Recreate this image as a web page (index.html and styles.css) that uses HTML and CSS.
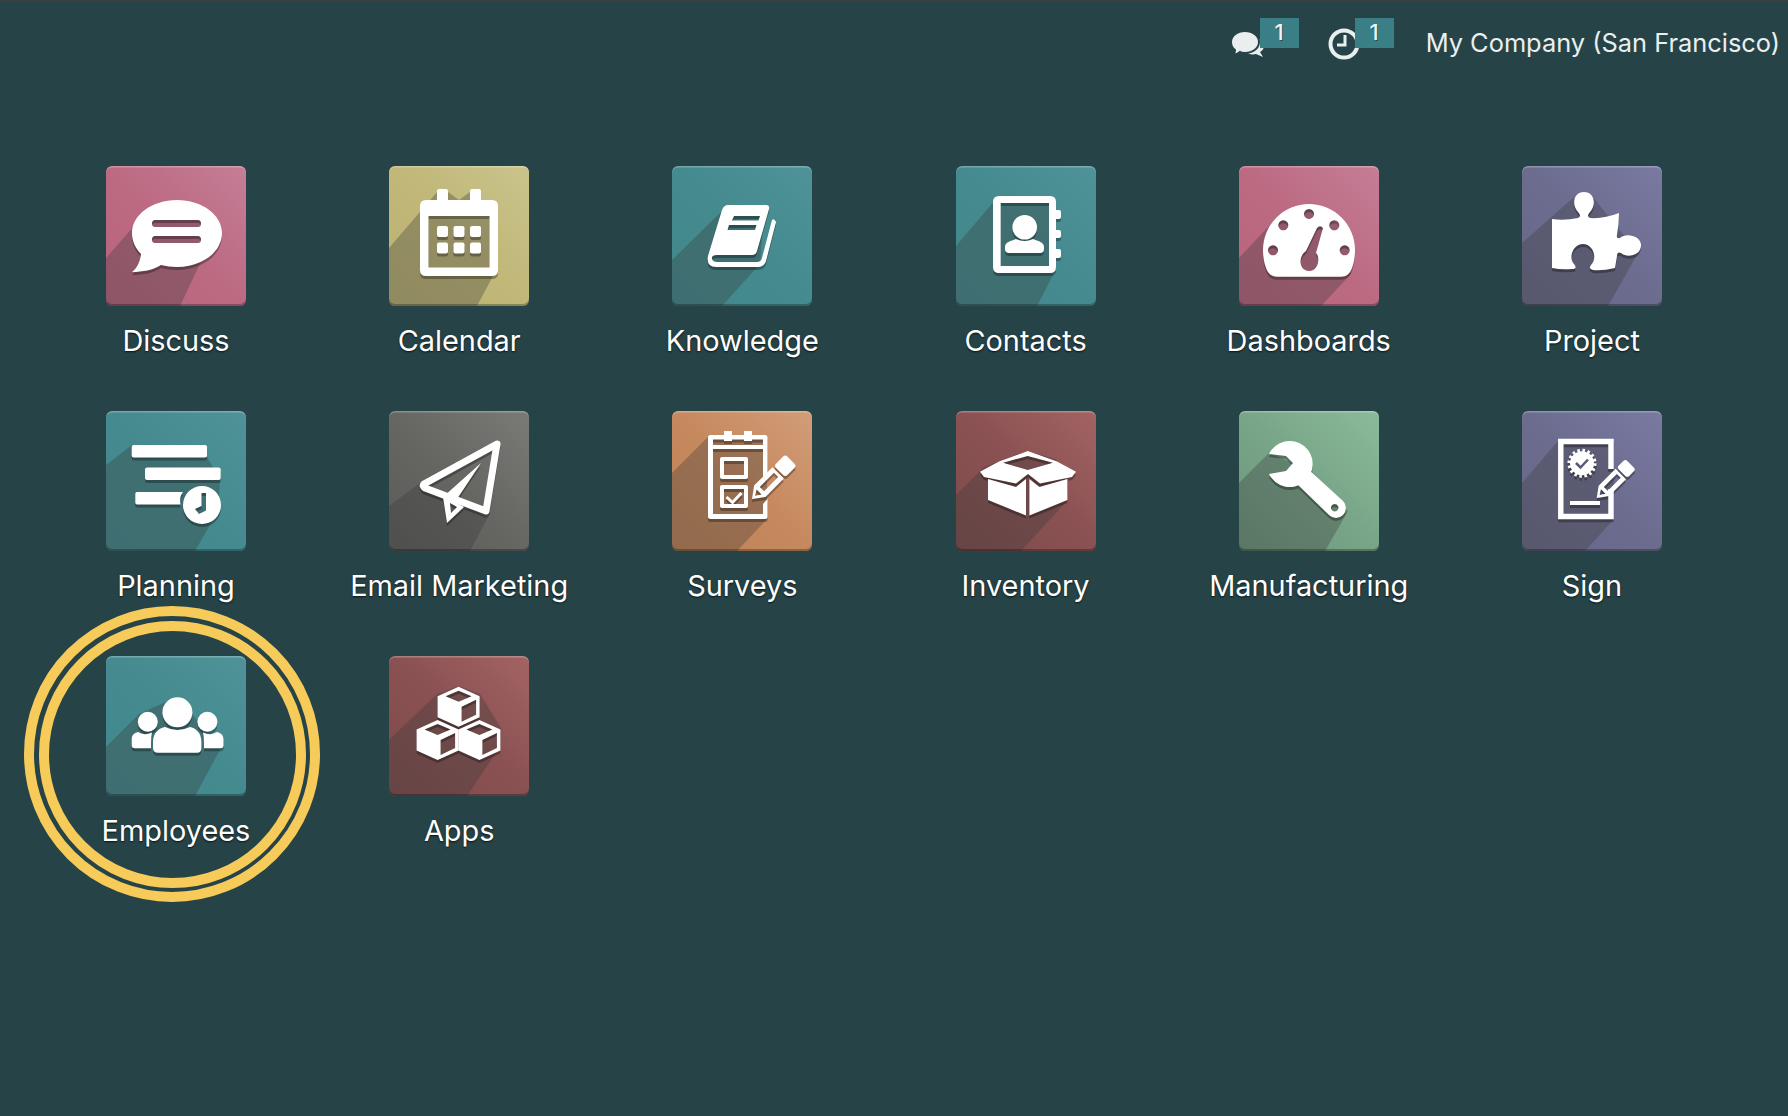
FILE: index.html
```html
<!DOCTYPE html>
<html lang="en">
<head>
<meta charset="utf-8">
<title>Odoo</title>
<link rel="stylesheet" href="styles.css">
</head>
<body>
<header class="topbar">
  <div class="sys-item sys-chat">
    <svg class="sys-icon" width="36" height="28" viewBox="0 0 36 28">
      <path class="sys-fill" d="M17 12 C22 6 34 8 34 16 C34 19 32 21 30 22 L33 27 L26 24 C22 25 18 24 16 22 Z"/>
      <path class="sys-fill sys-cut" d="M15 1 C23 1 29 6 29 12 C29 18 23 23 15 23 C13 23 11 23 10 22 C8 24 5 25 2 25 C4 24 5 22 5 20 C2 18 1 15 1 12 C1 6 7 1 15 1 Z"/>
    </svg>
    <span class="badge">1</span>
  </div>
  <div class="sys-item sys-clock">
    <svg class="sys-icon" width="34" height="34" viewBox="0 0 34 34">
      <circle class="sys-ring" cx="17" cy="17" r="13.5"/>
      <path class="sys-hand" d="M18 8 V18 H10"/>
    </svg>
    <span class="badge">1</span>
  </div>
  <span class="company">My Company (San Francisco)</span>
</header>

<main class="apps">
  <a class="app">
    <div class="tile pink">
      <svg viewBox="0 0 140 140" width="140" height="140">
        <polygon class="cast" points="0,92 35,52 96,50 100,85 74,140 0,140"/>
        <path class="glyph" fill-rule="evenodd" d="M71 34 C96 34 116 49 116 67 C116 86 96 101 71 101 C65 101 60 100 55 99 C47 104 37 106 26 106 C31 102 34 96 35 88 C29 82 26 75 26 67 C26 49 46 34 71 34 Z M49 54 Q46 54 46 57.5 Q46 61 49 61 H92 Q95 61 95 57.5 Q95 54 92 54 Z M49 70 Q46 70 46 73.5 Q46 77 49 77 H92 Q95 77 95 73.5 Q95 70 92 70 Z"/>
      </svg>
    </div>
    <span class="label">Discuss</span>
  </a>
  <a class="app">
    <div class="tile olive">
      <svg viewBox="0 0 140 140" width="140" height="140">
        <polygon class="cast" points="0,82 48,26 59,26 70,34 81,26 92,26 92,34 105,36 105,108 88,140 0,140"/>
        <path class="glyph" fill-rule="evenodd" d="M50 23 H57 Q59 23 59 25 V34 H81 V25 Q81 23 83 23 H90 Q92 23 92 25 V34 H103 Q109 34 109 40 V104 Q109 110 103 110 H37 Q31 110 31 104 V40 Q31 34 37 34 H48 V25 Q48 23 50 23 Z M39.5 50 V101.500 H100.500 V50 Z"/>
        <g class="glyph">
          <rect x="48" y="60" width="11" height="11" rx="2"/><rect x="64.500" y="60" width="11" height="11" rx="2"/><rect x="81" y="60" width="11" height="11" rx="2"/>
          <rect x="48" y="76.500" width="11" height="11" rx="2"/><rect x="64.500" y="76.500" width="11" height="11" rx="2"/><rect x="81" y="76.500" width="11" height="11" rx="2"/>
        </g>
      </svg>
    </div>
    <span class="label">Calendar</span>
  </a>
  <a class="app">
    <div class="tile teal">
      <svg viewBox="0 0 140 140" width="140" height="140">
        <polygon class="cast" points="0,94 50,45 92,42 88,98 50,140 0,140"/>
        <path class="glyph" fill-rule="evenodd" d="M56 39 H94 Q98 39 97 43 L85 85 Q84 89 80 89 H45 Q39 89 40 93 Q41 96 45 96 H85 Q89 96 90 92 L100 54 Q102 52 104 56 L94 95 Q92 101 86 101 H44 Q34 101 36 90 L50 44 Q52 39 56 39 Z M62 50 L60 54.500 H86.500 L88 50 Z M57 59 L55.500 64 H83 L84.500 59 Z"/>
      </svg>
    </div>
    <span class="label">Knowledge</span>
  </a>
  <a class="app">
    <div class="tile teal">
      <svg viewBox="0 0 140 140" width="140" height="140">
        <polygon class="cast" points="0,80 40,33 97,33 97,109 81,140 0,140"/>
        <path class="glyph" fill-rule="evenodd" d="M43 30 H94 Q100 30 100 36 V44 H103 Q105 44 105 46 V51 Q105 53 103 53 H100 V64 H103 Q105 64 105 66 V70 Q105 72 103 72 H100 V83 H103 Q105 83 105 85 V90 Q105 92 103 92 H100 V101 Q100 107 94 107 H43 Q37 107 37 101 V36 Q37 30 43 30 Z M44.700 37 V100 H93 V37 Z"/>
        <g class="glyph">
          <circle cx="68.700" cy="61.300" r="12.300"/>
          <path d="M49 81 C49 76 55 75 60 73 Q68.700 77 77 73 C82 75 88 76 88 81 V83 Q88 87 84 87 H53 Q49 87 49 83 Z"/>
        </g>
      </svg>
    </div>
    <span class="label">Contacts</span>
  </a>
  <a class="app">
    <div class="tile pink">
      <svg viewBox="0 0 140 140" width="140" height="140">
        <polygon class="cast" points="0,92 30,60 70,40 108,64 112,108 82,140 0,140"/>
        <path class="glyph" fill-rule="evenodd" d="M24 84 A46 46 0 0 1 116 84 Q116 94 113 102 Q110 110.700 102 110.700 H38 Q30 110.700 27 102 Q24 94 24 84 Z M70 43 a5 5 0 1 0 .01 0 Z M44.300 54.300 a5 5 0 1 0 .01 0 Z M95.300 54.300 a5 5 0 1 0 .01 0 Z M34 79.300 a5 5 0 1 0 .01 0 Z M105.700 79.300 a5 5 0 1 0 .01 0 Z M78 62 Q81 58.500 84 62 L77 87 C81 90 80.500 105 70 105 C59.500 105 59 90 67 85 Z"/>
      </svg>
    </div>
    <span class="label">Dashboards</span>
  </a>
  <a class="app">
    <div class="tile slate">
      <svg viewBox="0 0 140 140" width="140" height="140">
        <polygon class="cast" points="0,77 51,32 70,30 116,87 86,140 0,140"/>
        <path class="glyph" d="M30 53 Q42 55 56 52 Q60 50 56 46 C49 38 52 26 62 26 C72 26 75 38 68 46 Q64 50 68 52 Q82 53 97 47 Q97 58 95 69 Q94 73 98 72 C104 66 120 70 119 80 C118 90 105 92 99 87 Q95 85 95 90 L93 102 Q80 105 71 104 Q66 103 69 99 C76 92 71 78 61 78 C51 78 46 92 52 98 Q56 103 50 103 Q40 104 30 102 Z"/>
      </svg>
    </div>
    <span class="label">Project</span>
  </a>

  <a class="app">
    <div class="tile teal">
      <svg viewBox="0 0 140 140" width="140" height="140">
        <polygon class="cast" points="0,54 26,34 101,46 114,69 112,100 89,140 0,140"/>
        <g class="glyph">
          <rect x="25.700" y="34" width="75.300" height="12.500" rx="2"/>
          <rect x="39" y="56.500" width="75.700" height="12.500" rx="2"/>
          <path d="M31 81 H77 Q73 86 74.500 93.500 H31 Q29.300 93.500 29.300 91.500 V83 Q29.300 81 31 81 Z"/>
          <path fill-rule="evenodd" d="M77 94 a19 19 0 1 0 38 0 a19 19 0 1 0 -38 0 Z M95.500 82 H100 V99.500 L93 103 L89 98 L95.500 95 Z"/>
        </g>
      </svg>
    </div>
    <span class="label">Planning</span>
  </a>
  <a class="app">
    <div class="tile gray">
      <svg viewBox="0 0 140 140" width="140" height="140">
        <polygon class="cast" points="0,95 31,72 60,90 99,106 81,140 0,140"/>
        <g class="glyph">
          <path class="plane" d="M108 33 L35 73 Q33 75 36 77 L97 100 Z"/>
          <path fill-rule="evenodd" d="M92 52 L54 86 L58 112 L75 96 L66 91 Z M61 92 L62 102 L68 96 Z"/>
        </g>
      </svg>
    </div>
    <span class="label">Email Marketing</span>
  </a>
  <a class="app">
    <div class="tile orange">
      <svg viewBox="0 0 140 140" width="140" height="140">
        <polygon class="cast" points="0,62 36,26 95,26 95,108 65,140 0,140"/>
        <g class="glyph">
          <path fill-rule="evenodd" d="M52 20 H60 V24 H72 V20 H80 V24 H93 Q95.500 24 95.500 26.500 V62 L91 66 V38 H41 V103 H91 V93 L95.500 88 V105.500 Q95.500 108 93 108 H38.500 Q36 108 36 105.500 V26.500 Q36 24 38.500 24 H52 Z M41 28.500 V34 H91 V28.500 H80 V30 H72 V28.500 H60 V30 H52 V28.500 Z"/>
          <path fill-rule="evenodd" d="M50 46 H74 Q76 46 76 48 V66 Q76 68 74 68 H50 Q48 68 48 66 V48 Q48 46 50 46 Z M52 50 V64 H72 V50 Z"/>
          <path fill-rule="evenodd" d="M50 74 H74 Q76 74 76 76 V95 Q76 97 74 97 H50 Q48 97 48 95 V76 Q48 74 50 74 Z M52 78 V93 H72 V78 Z"/>
          <path class="tick" d="M54.500 86 L60.500 91.500 L69.500 82"/>
          <g transform="translate(80 88) rotate(-45)">
            <path fill-rule="evenodd" d="M0 0 L11 -8 H37 V8 H11 Z M14 -3 H34 V3 H14 Z M4.500 0 L10 3.500 V-3.500 Z"/>
            <rect x="39" y="-8" width="16" height="16" rx="3"/>
          </g>
        </g>
      </svg>
    </div>
    <span class="label">Surveys</span>
  </a>
  <a class="app">
    <div class="tile maroon">
      <svg viewBox="0 0 140 140" width="140" height="140">
        <polygon class="cast" points="0,84 28,56 70,40 100,48 112,72 111,90 65,140 0,140"/>
        <g class="glyph">
          <path fill-rule="evenodd" d="M71.700 40 L101 50.500 L120 60.700 L116 66 L84 72.500 L72 63 L60 72.500 L28 66 L24 60.700 L43 50.500 Z M71.700 45 L47 51.700 L71.700 59 L97 51.700 Z"/>
          <path d="M32 68 L60 76 L70 68 V104.500 L32 89 Z"/>
          <path d="M111.400 68 L83.400 76 L73.400 68 V104.500 L111.400 89 Z"/>
        </g>
      </svg>
    </div>
    <span class="label">Inventory</span>
  </a>
  <a class="app">
    <div class="tile green">
      <svg viewBox="0 0 140 140" width="140" height="140">
        <polygon class="cast" points="0,72 30,42 72,60 109,100 86,140 0,140"/>
        <g class="glyph">
          <path d="M30 43 L47 45 L54 52 L47 60 L30 63 A23 23 0 1 0 30 43 Z"/>
          <path fill-rule="evenodd" d="M69 58 L104 90 A9.500 9.500 0 0 1 90 104 L57 72 Z M95.700 93 a3.700 3.700 0 1 0 .01 0 Z"/>
        </g>
      </svg>
    </div>
    <span class="label">Manufacturing</span>
  </a>
  <a class="app">
    <div class="tile slate">
      <svg viewBox="0 0 140 140" width="140" height="140">
        <polygon class="cast" points="0,72 36,30 92,30 92,108 63,140 0,140"/>
        <g class="glyph">
          <path class="doc" d="M89 58 V30.500 H38.800 V105.500 H89 V78"/>
          <rect x="48" y="90" width="30" height="4"/>
          <circle cx="60" cy="52.300" r="12"/>
          <circle class="seal" cx="60" cy="52.300" r="12.800"/>
          <g transform="translate(74.700 87) rotate(-45) scale(.92)">
            <path fill-rule="evenodd" d="M0 0 L11 -8 H37 V8 H11 Z M14 -3 H34 V3 H14 Z M4.500 0 L10 3.500 V-3.500 Z"/>
            <rect x="39" y="-8" width="13" height="16" rx="3"/>
          </g>
        </g>
        <path class="sealcheck" d="M54 52 L58.500 56.500 L66 48.500"/>
      </svg>
    </div>
    <span class="label">Sign</span>
  </a>

  <a class="app">
    <div class="tile teal">
      <svg viewBox="0 0 140 140" width="140" height="140">
        <polygon class="cast" points="0,91 33,58 71,41 115,92 89,140 0,140"/>
        <g class="glyph">
          <circle cx="71.400" cy="56.300" r="15"/>
          <circle cx="41.800" cy="65.700" r="10"/>
          <circle cx="101.400" cy="65.700" r="10"/>
          <path d="M47 86 C47 76 54 72 59 71 Q71.400 77 84 71 C89 72 95.400 76 95.400 86 V92 Q95.400 96.700 91 96.700 H52 Q47 96.700 47 92 Z"/>
          <path d="M25.700 84 C25.700 79 28 77 32 76 Q38 80 46 76.500 Q45 80 45 92.300 H28.700 Q25.700 92.300 25.700 89 Z"/>
          <path d="M117.500 84 C117.500 79 115 77 111 76 Q105 80 97 76.500 Q98 80 98 92.300 H114.500 Q117.500 92.300 117.500 89 Z"/>
        </g>
      </svg>
    </div>
    <span class="label">Employees</span>
  </a>
  <a class="app">
    <div class="tile maroon">
      <svg viewBox="0 0 140 140" width="140" height="140">
        <defs>
          <path id="cube" fill-rule="evenodd" d="M0 0 L21 9.500 V30.500 L0 40 L-21 30.500 V9.500 Z M0 4 L-13 9.500 L0 15 L13 9.500 Z M3 20 V35 L17.500 28 V13 Z"/>
        </defs>
        <polygon class="cast" points="0,84 48,38 70,30 91,38 112,72 110,92 78,140 0,140"/>
        <g class="glyph">
          <use href="#cube" transform="translate(69.600 30.700)"/>
          <use href="#cube" transform="translate(48.600 64)"/>
          <use href="#cube" transform="translate(90.400 64)"/>
        </g>
      </svg>
    </div>
    <span class="label">Apps</span>
  </a>

  <div class="ring"></div>
</main>
</body>
</html>
```
FILE: styles.css
```css
* {
  box-sizing: border-box;
}

html,
body {
  margin: 0;
  height: 100%;
}

body {
  background: #264448;
  font-family: Inter, Roboto, "Liberation Sans", sans-serif;
  color: #fff;
  overflow: hidden;
}

.topbar {
  display: flex;
  justify-content: flex-end;
  align-items: flex-start;
  height: 84px;
  border-top: 2px solid #3a3f40;
  padding-right: 8px;
}

.sys-item {
  display: flex;
  align-items: flex-start;
}

.sys-chat {
  margin-right: 28px;
}

.sys-clock {
  margin-right: 32px;
}

.sys-icon {
  display: block;
}

.sys-chat .sys-icon {
  margin: 28px -6px 0 0;
}

.sys-clock .sys-icon {
  margin: 25px -6px 0 0;
}

.sys-fill {
  fill: #e9eeee;
}

.sys-cut {
  stroke: #264448;
  stroke-width: 2;
}

.sys-ring {
  fill: none;
  stroke: #e9eeee;
  stroke-width: 4;
}

.sys-hand {
  fill: none;
  stroke: #e9eeee;
  stroke-width: 3;
}

.badge {
  position: relative;
  width: 39px;
  height: 30px;
  margin-top: 16px;
  background: #3a7f86;
  font-size: 22px;
  line-height: 28px;
  text-align: center;
  font-weight: 500;
  color: #eef3f3;
  text-shadow: 1px 1px 0 rgba(0, 0, 0, 0.4);
}

.company {
  margin-top: 26px;
  font-size: 25.4px;
  line-height: 30px;
  color: #eaefef;
}

.apps {
  position: relative;
  display: grid;
  grid-template-columns: repeat(6, 283.2px);
  grid-auto-rows: 245px;
  padding: 82px 0 0 34.4px;
}

.app {
  display: flex;
  flex-direction: column;
  align-items: center;
}

.tile {
  position: relative;
  width: 140px;
  height: 140px;
  border-radius: 6px;
  overflow: hidden;
}

.tile svg {
  display: block;
}

.tile::after {
  content: "";
  position: absolute;
  inset: 0;
  border-radius: 6px;
  box-shadow: inset 0 1.5px 0 rgba(255, 255, 255, 0.25), inset 0 -2px 0 rgba(0, 0, 0, 0.28);
}

.pink {
  background: linear-gradient(45deg, #b9637d 0%, #bc6a82 50%, #c47e96 100%);
}

.olive {
  background: linear-gradient(45deg, #bdb372 0%, #c0b778 50%, #cac48c 100%);
}

.teal {
  background: linear-gradient(45deg, #41888c 0%, #448a8f 50%, #4f9398 100%);
}

.slate {
  background: linear-gradient(45deg, #676789 0%, #6c6c8f 50%, #7a7aa2 100%);
}

.gray {
  background: linear-gradient(45deg, #5a5a58 0%, #666663 50%, #7a7a76 100%);
}

.orange {
  background: linear-gradient(45deg, #c08256 0%, #c6895e 50%, #d29d78 100%);
}

.maroon {
  background: linear-gradient(45deg, #7d4a4b 0%, #8a5152 50%, #a36363 100%);
}

.green {
  background: linear-gradient(45deg, #6b967c 0%, #78a588 50%, #8abb99 100%);
}

.cast {
  fill: #393939;
  opacity: 0.33;
}

.glyph {
  fill: #fff;
  filter: drop-shadow(0 3px 0 rgba(0, 0, 0, 0.3));
}

.plane {
  fill: none;
  stroke: #fff;
  stroke-width: 7;
  stroke-linejoin: round;
}

.tick {
  fill: none;
  stroke: #fff;
  stroke-width: 3;
}

.doc {
  fill: none;
  stroke: #fff;
  stroke-width: 5.5;
}

.seal {
  fill: none;
  stroke: #fff;
  stroke-width: 3.5;
  stroke-dasharray: 2.5 2.53;
}

.sealcheck {
  fill: none;
  stroke: #595a74;
  stroke-width: 2.5;
}

.label {
  margin-top: 17px;
  font-size: 28.9px;
  line-height: 36px;
  white-space: nowrap;
  text-shadow: 0 1px 2px rgba(0, 0, 0, 0.75);
}

.ring {
  position: absolute;
  left: 24px;
  top: 522px;
  width: 296px;
  height: 296px;
  border: 10px solid #f6cb5a;
  border-radius: 50%;
}

.ring::before {
  content: "";
  position: absolute;
  inset: 4.5px;
  border: 10px solid #f6cb5a;
  border-radius: 50%;
}
```
